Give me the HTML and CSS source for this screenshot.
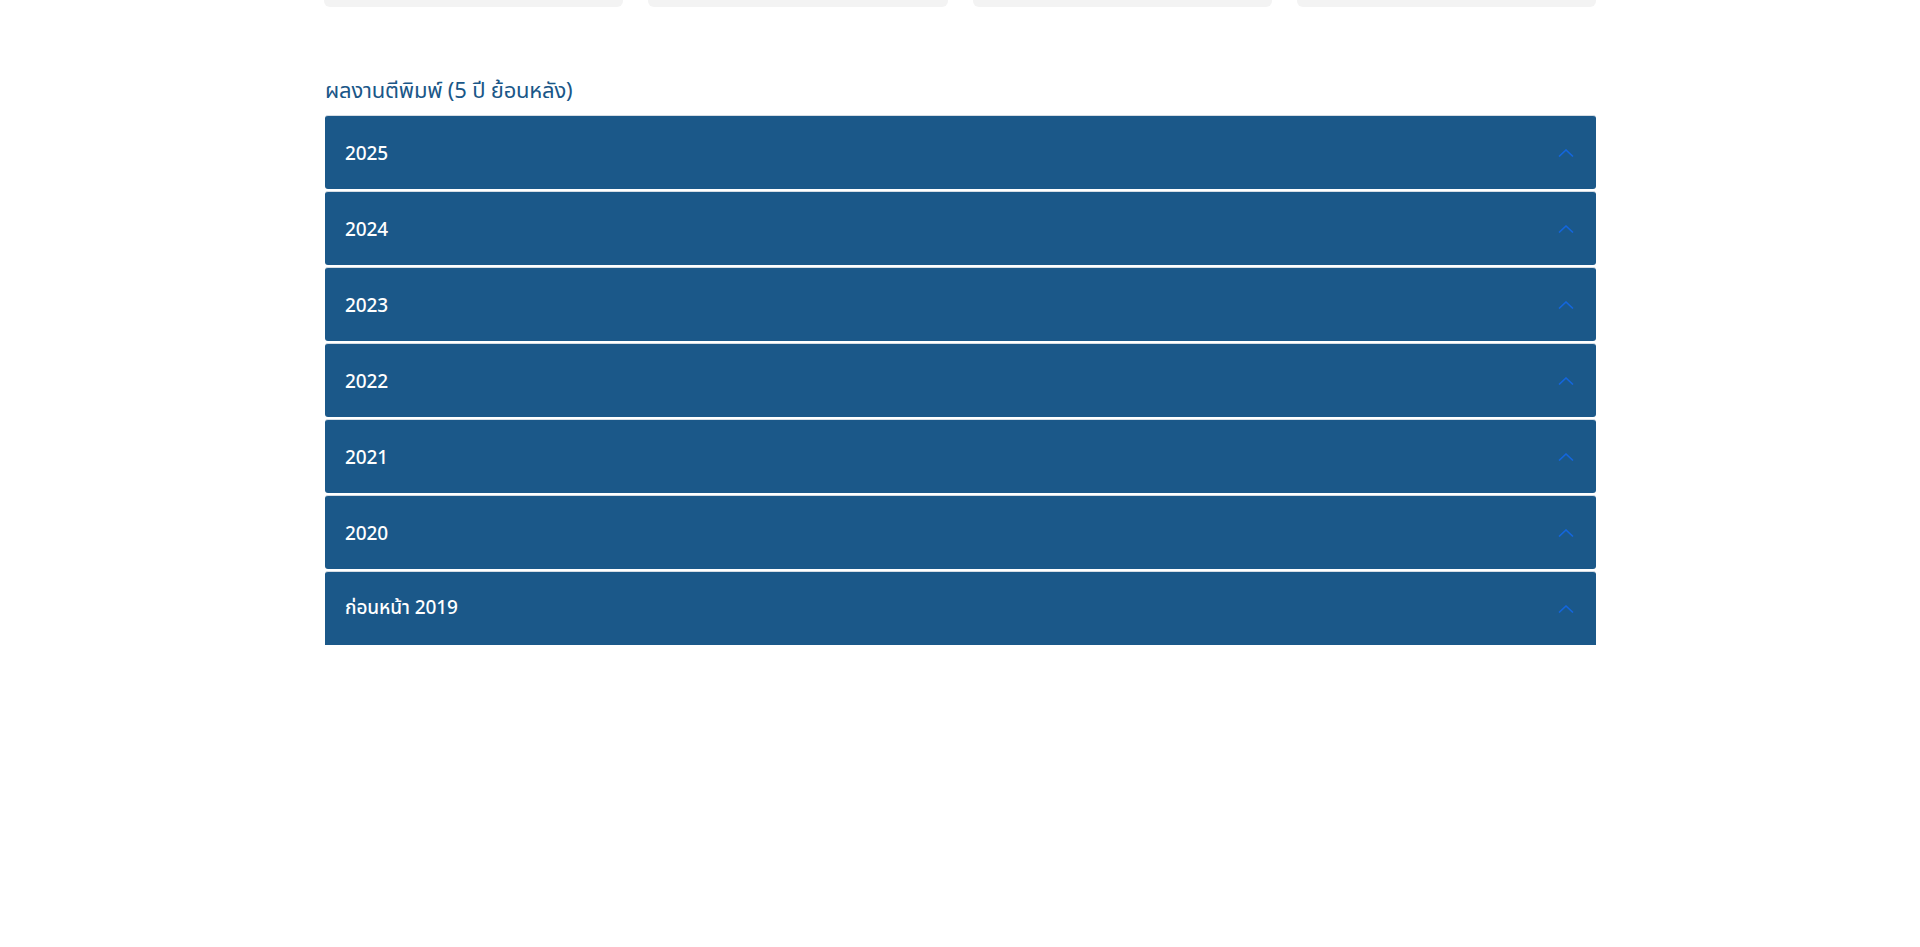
FILE: index.html
```html
<!DOCTYPE html>
<html lang="th">
<head>
<meta charset="utf-8">
<title>ผลงานตีพิมพ์</title>
<link rel="stylesheet" href="styles.css">
</head>
<body>
<div class="container">
  <div class="cards">
    <div class="card"></div>
    <div class="card"></div>
    <div class="card"></div>
    <div class="card"></div>
  </div>
  <h2 class="title">ผลงานตีพิมพ์ (5 ปี ย้อนหลัง)</h2>
  <div class="accordion">
    <div class="item"><span class="label">2025</span><svg class="chev" viewBox="0 0 16 8"><path d="M1 7.5 L8 1 L15 7.5"/></svg></div>
    <div class="item"><span class="label">2024</span><svg class="chev" viewBox="0 0 16 8"><path d="M1 7.5 L8 1 L15 7.5"/></svg></div>
    <div class="item"><span class="label">2023</span><svg class="chev" viewBox="0 0 16 8"><path d="M1 7.5 L8 1 L15 7.5"/></svg></div>
    <div class="item"><span class="label">2022</span><svg class="chev" viewBox="0 0 16 8"><path d="M1 7.5 L8 1 L15 7.5"/></svg></div>
    <div class="item"><span class="label">2021</span><svg class="chev" viewBox="0 0 16 8"><path d="M1 7.5 L8 1 L15 7.5"/></svg></div>
    <div class="item"><span class="label">2020</span><svg class="chev" viewBox="0 0 16 8"><path d="M1 7.5 L8 1 L15 7.5"/></svg></div>
    <div class="item"><span class="label">ก่อนหน้า 2019</span><svg class="chev" viewBox="0 0 16 8"><path d="M1 7.5 L8 1 L15 7.5"/></svg></div>
  </div>
</div>
</body>
</html>
```
FILE: styles.css
```css
html, body {
  margin: 0;
  padding: 0;
  background: #ffffff;
}
body {
  font-family: "Noto Sans", "Noto Sans Thai", "DejaVu Sans", sans-serif;
}
.container {
  width: 1272px;
  margin: 0 auto;
}
.cards {
  display: grid;
  grid-template-columns: repeat(4, 1fr);
  column-gap: 25px;
}
.card {
  height: 7px;
  background: #f3f3f3;
  border-radius: 0 0 6px 6px;
}
.title {
  margin: 67px 0 11px 1px;
  font-size: 22px;
  line-height: 30px;
  font-weight: 400;
  color: #1a5788;
  letter-spacing: -0.2px;
}
.accordion {
  display: flex;
  flex-direction: column;
  gap: 2px;
  margin-left: 1px;
  width: 1271px;
}
.item {
  height: 74px;
  box-sizing: border-box;
  background: #1b5889;
  border-top: 1px solid #d6dde4;
  border-radius: 3px;
  display: flex;
  align-items: center;
  justify-content: space-between;
  padding: 0 22px 0 20px;
  color: #ffffff;
}
.item:last-child {
  border-radius: 3px 3px 0 0;
  box-shadow: 0 1px 0 #c9d3dc;
}
.label {
  font-size: 19px;
  font-weight: 500;
  letter-spacing: -0.1px;
}
.chev {
  width: 16px;
  height: 8px;
  fill: none;
  stroke: #1466dc;
  stroke-width: 1.6;
}
```
